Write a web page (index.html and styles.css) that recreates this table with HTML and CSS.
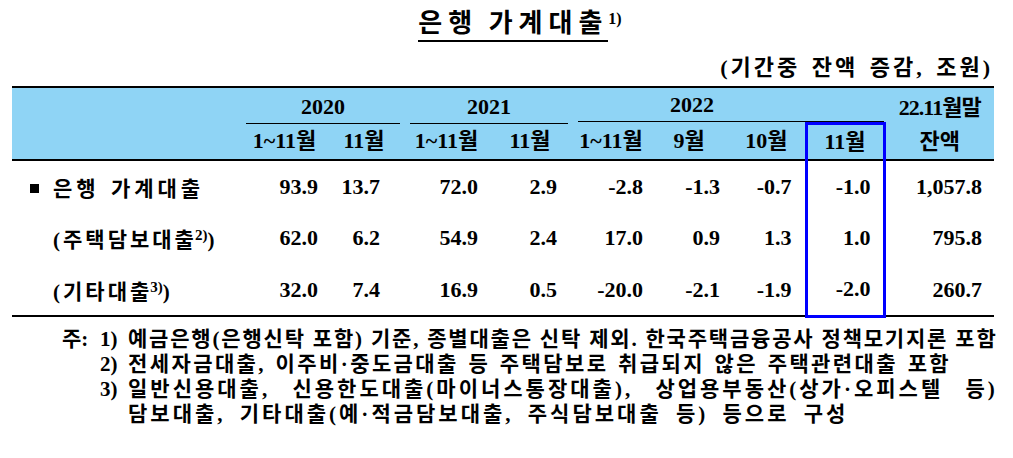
FILE: index.html
```html
<!DOCTYPE html>
<html lang="ko">
<head>
<meta charset="utf-8">
<title>은행 가계대출</title>
<link rel="stylesheet" href="styles.css">
</head>
<body>
<div class="page">
  <h1 class="title"><span class="title-text">은행 가계대출</span><span class="title-sup">1)</span></h1>
  <div class="unit">(기간중 잔액 증감, 조원)</div>
  <table class="tbl">
    <colgroup>
      <col class="c-lbl">
      <col class="c-a"><col class="c-b">
      <col class="c-c"><col class="c-d">
      <col class="c-e"><col class="c-e"><col class="c-e"><col class="c-e">
      <col class="c-bal">
    </colgroup>
    <thead>
      <tr class="r-year">
        <th rowspan="2" class="h-lbl"></th>
        <th colspan="2" class="h-yr"><div class="yr yr20">2020</div></th>
        <th colspan="2" class="h-yr"><div class="yr yr21">2021</div></th>
        <th colspan="4" class="h-yr"><div class="yr yr22">2022</div></th>
        <th rowspan="2" class="h-bal"><span class="bal-1">22.11월말</span><span class="bal-2">잔액</span></th>
      </tr>
      <tr class="r-mon">
        <th>1~11월</th><th>11월</th>
        <th>1~11월</th><th>11월</th>
        <th>1~11월</th><th>9월</th><th>10월</th><th class="hl">11월</th>
      </tr>
    </thead>
    <tbody>
      <tr>
        <td class="lbl lbl-main"><span class="sq"></span>은행 가계대출</td>
        <td>93.9</td><td>13.7</td><td>72.0</td><td>2.9</td><td>-2.8</td><td>-1.3</td><td>-0.7</td><td class="hl">-1.0</td><td>1,057.8</td>
      </tr>
      <tr>
        <td class="lbl lbl-sub">(주택담보대출<span class="sup">2)</span>)</td>
        <td>62.0</td><td>6.2</td><td>54.9</td><td>2.4</td><td>17.0</td><td>0.9</td><td>1.3</td><td class="hl">1.0</td><td>795.8</td>
      </tr>
      <tr class="r-last">
        <td class="lbl lbl-sub">(기타대출<span class="sup">3)</span>)</td>
        <td>32.0</td><td>7.4</td><td>16.9</td><td>0.5</td><td>-20.0</td><td>-2.1</td><td>-1.9</td><td class="hl">-2.0</td><td>260.7</td>
      </tr>
    </tbody>
  </table>
  <div class="notes">
    <span class="n-head">주:</span><span class="n-num">1)</span><span class="n-txt n1">예금은행(은행신탁 포함) 기준, 종별대출은 신탁 제외. 한국주택금융공사 정책모기지론 포함</span>
    <span class="n-head"></span><span class="n-num">2)</span><span class="n-txt n2">전세자금대출, 이주비·중도금대출 등 주택담보로 취급되지 않은 주택관련대출 포함</span>
    <span class="n-head"></span><span class="n-num">3)</span><span class="n-txt n3">일반신용대출, 신용한도대출(마이너스통장대출), 상업용부동산(상가·오피스텔 등)</span>
    <span class="n-head"></span><span class="n-num"></span><span class="n-txt n4">담보대출, 기타대출(예·적금담보대출, 주식담보대출 등) 등으로 구성</span>
  </div>
</div>
</body>
</html>
```

FILE: styles.css
```css
* { box-sizing: border-box; }
html, body { margin: 0; padding: 0; background: #fff; }
body {
  font-family: "Liberation Serif", "Noto Sans CJK KR", serif;
  font-weight: 700;
  color: #000;
}
.page { width: 1013px; height: 458px; overflow: hidden; }

.title {
  margin: 0;
  padding: 8px 0 0 27px;
  text-align: center;
  font-size: 26px;
  line-height: 32px;
  font-weight: 700;
}
.title-text {
  display: inline-block;
  border-bottom: 2px solid #000;
  letter-spacing: 6px;
  word-spacing: -2px;
}
.title-sup {
  font-size: 16px;
  vertical-align: top;
  line-height: 22px;
}

.unit {
  margin-top: 12px;
  padding-right: 20px;
  text-align: right;
  font-size: 22px;
  line-height: 28px;
  letter-spacing: 3px;
  word-spacing: 3px;
}

.tbl {
  margin: 4px 0 0 12px;
  width: 982px;
  table-layout: fixed;
  border-collapse: collapse;
  font-size: 22px;
}
.c-lbl { width: 234px; }
.c-a { width: 77px; }
.c-b { width: 82px; }
.c-c { width: 83px; }
.c-d { width: 84px; }
.c-e { width: 78px; }
.c-bal { width: 110px; }

.tbl thead th {
  background: #8fd4f5;
  padding: 0;
  font-weight: 700;
  text-align: center;
}
.r-year th { border-top: 2px solid #000; height: 35px; vertical-align: bottom; }
.r-mon th { border-bottom: 2px solid #000; height: 35px; line-height: 34px; vertical-align: middle; }
.h-lbl, .h-bal { border-bottom: 2px solid #000; }
.yr {
  border-bottom: 1px solid #000;
  line-height: 33px;
}
.yr20 { margin: 0 5px 0 0; }
.yr21 { margin: 0 4px 0 5px; }
.yr22 { margin: 0 0 0 6px; padding-right: 78px; }
.h-bal { vertical-align: middle; line-height: 34px; }
.bal-1, .bal-2 { display: block; }
.bal-1 { letter-spacing: -1px; }

.tbl tbody td {
  height: 52px;
  padding: 0;
  text-align: right;
  vertical-align: middle;
}
.tbl tbody tr.r-last td { border-bottom: 2px solid #000; }
.tbl tbody td:nth-child(2) { padding-right: 5px; }
.tbl tbody td:nth-child(3) { padding-right: 25px; }
.tbl tbody td:nth-child(4) { padding-right: 10px; }
.tbl tbody td:nth-child(5) { padding-right: 15px; }
.tbl tbody td:nth-child(6) { padding-right: 7px; }
.tbl tbody td:nth-child(7) { padding-right: 8px; }
.tbl tbody td:nth-child(8) { padding-right: 13px; }
.tbl tbody td:nth-child(9) { padding-right: 12px; }
.tbl tbody td:nth-child(10) { padding-right: 12px; }

.tbl .hl { border-left: 3px solid #0000ff; border-right: 3px solid #0000ff; }
.r-mon th.hl { border-top: 3px solid #0000ff; }
.tbl tbody tr.r-last td.hl { border-bottom: 3px solid #0000ff; }

.tbl tbody td.lbl { text-align: left; font-size: 21px; letter-spacing: 3px; }
.tbl tbody td.lbl-main { padding-left: 18px; letter-spacing: 4px; word-spacing: 2px; }
.tbl tbody td.lbl-sub { padding-left: 41px; }
.sq {
  display: inline-block;
  width: 9px;
  height: 9px;
  background: #000;
  margin-right: 14px;
  vertical-align: 3px;
}
.sup { font-size: 15px; vertical-align: 7px; line-height: 1; letter-spacing: 0; margin-left: -2px; }

.notes {
  margin-top: 9px;
  padding-left: 62px;
  display: grid;
  grid-template-columns: 38px 28px 880px;
  font-size: 21px;
  line-height: 25px;
}
.n-txt { white-space: nowrap; }
.n1 { letter-spacing: 1.8px; }
.n2 { letter-spacing: 2.4px; word-spacing: 2px; }
.n3 { letter-spacing: 3px; word-spacing: 14px; }
.n4 { letter-spacing: 3px; word-spacing: 6px; }
```
